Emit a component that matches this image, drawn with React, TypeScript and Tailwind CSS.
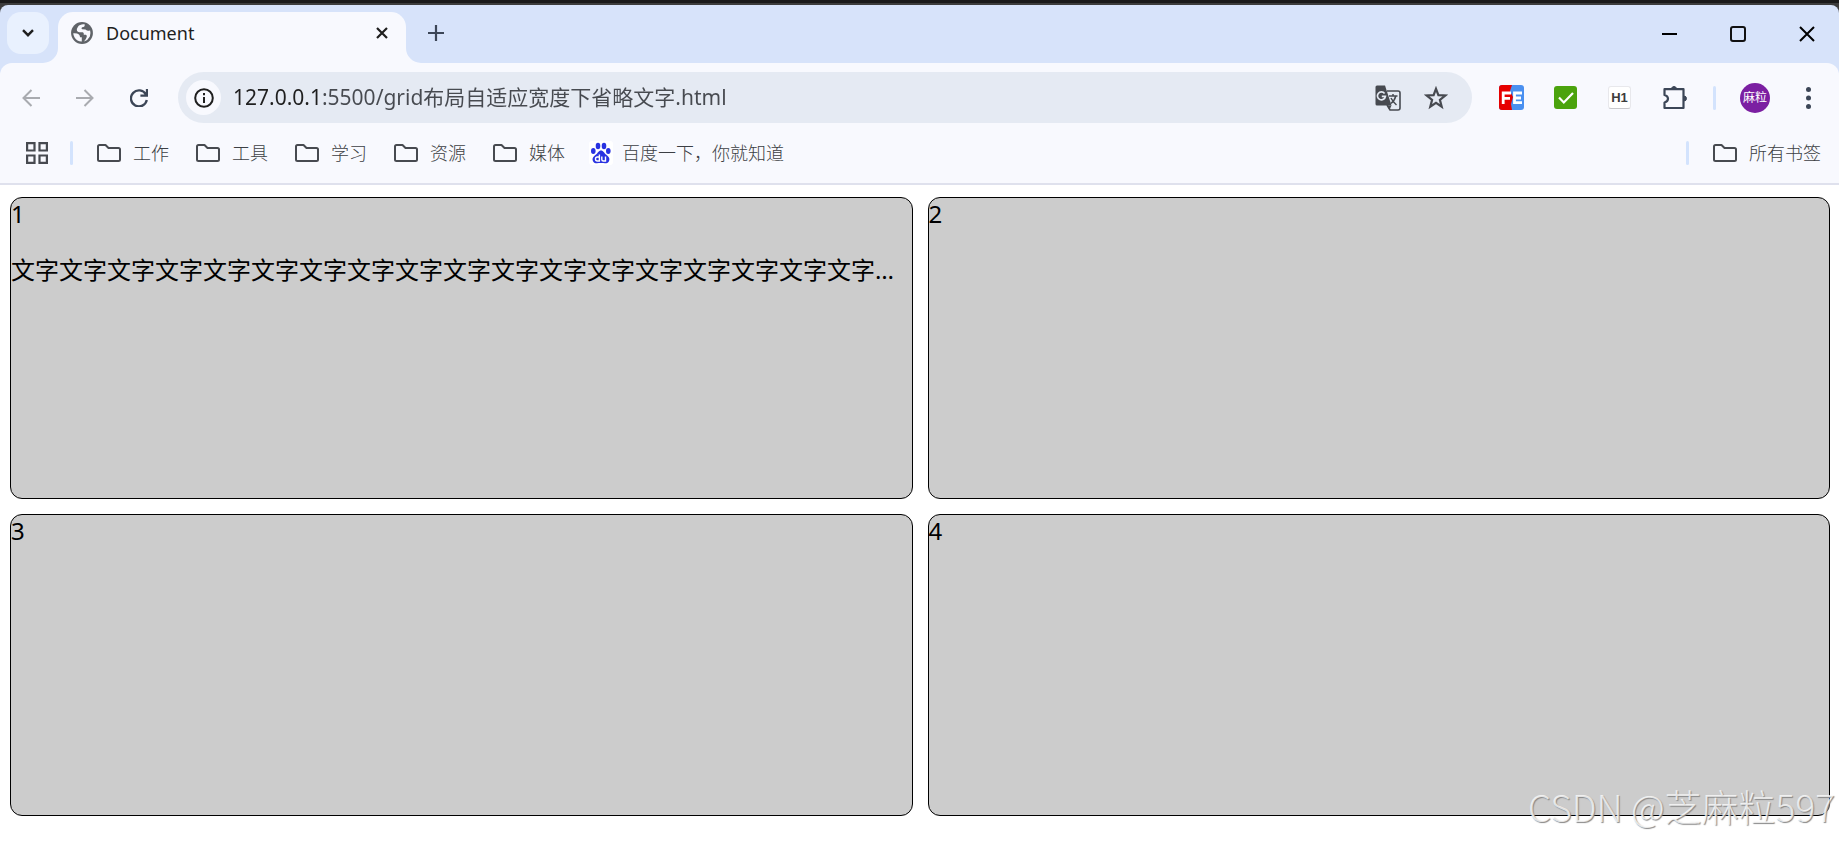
import React from 'react'

const bookmarks = ['工作', '工具', '学习', '资源', '媒体']

const text = '文字'.repeat(19)

const cards = [
  { title: '1', content: text },
  { title: '2', content: '' },
  { title: '3', content: '' },
  { title: '4', content: '' },
]

const FolderIcon = () => (
  <svg className="w-6 h-[18px]" viewBox="0 0 24 18" fill="none" stroke="#474a50" strokeWidth="2" strokeLinejoin="round">
    <path d="M2.5 1H8.5L11.5 4H21.5Q23 4 23 5.5V15.5Q23 17 21.5 17H2.5Q1 17 1 15.5V2.5Q1 1 2.5 1Z" />
  </svg>
)

const Divider = () => <span className="w-[3px] h-6 rounded-full bg-[#d3e3fd] shrink-0" />

const TabStrip = () => (
  <div className="h-[58px] flex items-end bg-[#d7e3fa] rounded-t-lg">
    <button aria-label="搜索标签页" className="ml-[7px] mb-[9px] w-[42px] h-[42px] rounded-[14px] bg-[#e9f1fe] flex items-center justify-center -mr-[6px]">
      <svg className="w-3 h-2" viewBox="0 0 12 8" fill="none" stroke="#1f1f1f" strokeWidth="2.4">
        <path d="M1 1.2L6 6.2L11 1.2" />
      </svg>
    </button>
    <svg className="w-[15px] h-[15px] shrink-0" viewBox="0 0 15 15" fill="#f8f9fe">
      <path d="M15 0V15H0A15 15 0 0 0 15 0Z" />
    </svg>
    <div className="w-[348px] h-[51px] rounded-t-[15px] bg-[#f8f9fe] flex items-center px-3 pb-[9px]">
      <svg className="w-6 h-6" viewBox="1 1 22 22">
        <circle cx="12" cy="12" r="10" fill="#5f6368" />
        <path
          d="M14.6 4.2C12 3.7 9.6 4.6 8.3 6.2Q6.8 8.2 7.4 9.9Q8 11.3 9.8 11.2H12.6Q13.6 11.3 13.6 12.5V13.7H15.6Q16.6 14 16.4 15.4Q16 17.3 13.8 19.7Q17.6 18.6 19.2 15.2Q20.3 12.4 19.4 9.4Q18.6 10 17.4 9.9Q15.9 9.8 15.2 8.8L12.2 8.6Q11.4 8.3 11.6 7.4Q11.8 6.7 13.4 6.6Q14.6 6.3 14.6 4.2ZM4 12.2Q7.8 12 9.2 13.4Q10.2 14.4 10.2 15.8H11.8V19.9Q7.5 20 5.2 16.2Q4 14.3 4 12.2Z"
          fill="#f8f9fe"
        />
      </svg>
      <span className="ml-3 flex-1 text-[18px] leading-6 text-[#1f1f1f]">Document</span>
      <button aria-label="关闭标签页" className="mr-1.5">
        <svg className="w-3 h-3" viewBox="0 0 12 12" stroke="#1f1f1f" strokeWidth="2.2">
          <path d="M1 1L11 11M11 1L1 11" />
        </svg>
      </button>
    </div>
    <svg className="w-[15px] h-[15px] shrink-0" viewBox="0 0 15 15" fill="#f8f9fe">
      <path d="M0 0V15H15A15 15 0 0 1 0 0Z" />
    </svg>
    <button aria-label="新标签页" className="ml-[7px] mb-[22px]">
      <svg className="w-4 h-4" viewBox="0 0 16 16" stroke="#3c4657" strokeWidth="2.2">
        <path d="M8 0V16M0 8H16" />
      </svg>
    </button>
    <div className="ml-auto mr-6 mb-[21px] flex items-center gap-[53px]">
      <button aria-label="最小化">
        <svg className="w-4 h-4" viewBox="0 0 16 16" stroke="#000" strokeWidth="2">
          <path d="M1 8H16" />
        </svg>
      </button>
      <button aria-label="最大化">
        <svg className="w-4 h-4" viewBox="0 0 16 16" fill="none" stroke="#111" strokeWidth="2">
          <rect x="1" y="1" width="14" height="14" rx="2" />
        </svg>
      </button>
      <button aria-label="关闭">
        <svg className="w-4 h-4" viewBox="0 0 16 16" stroke="#000" strokeWidth="2">
          <path d="M1 1L15 15M15 1L1 15" />
        </svg>
      </button>
    </div>
  </div>
)

const Toolbar = () => (
  <div className="flex items-center pl-[22px] pr-7 pt-[9px]">
    <button aria-label="后退">
      <svg className="w-[18px] h-[18px]" viewBox="0 0 18 18" fill="none" stroke="#a9abb0" strokeWidth="2">
        <path d="M18 9H1.5M9.5 1L1.5 9L9.5 17" />
      </svg>
    </button>
    <button aria-label="前进" className="ml-9">
      <svg className="w-[18px] h-[18px]" viewBox="0 0 18 18" fill="none" stroke="#a9abb0" strokeWidth="2">
        <path d="M0 9H16.5M8.5 1L16.5 9L8.5 17" />
      </svg>
    </button>
    <button aria-label="重新加载" className="ml-9">
      <svg className="w-[18px] h-[18px]" viewBox="0 0 18 18" fill="none" stroke="#3c4657" strokeWidth="2.3">
        <path d="M15.9 5.4A8 8 0 1 0 16.8 11M17 0V6.6H10.4" />
      </svg>
    </button>
    <div className="ml-[30px] flex-1 h-[51px] rounded-full bg-[#e5eaf3] flex items-center pl-2 pr-6">
      <button aria-label="查看网站信息" className="w-[35px] h-[35px] rounded-full bg-[#f8f9fe] flex items-center justify-center">
        <svg className="w-5 h-5" viewBox="0 0 20 20" fill="none" stroke="#1f1f1f" strokeWidth="2">
          <circle cx="10" cy="10" r="8.8" />
          <path d="M10 9V15M10 5V7.2" />
        </svg>
      </button>
      <input
        aria-label="地址"
        defaultValue="127.0.0.1:5500/grid布局自适应宽度下省略文字.html"
        className="ml-3 pb-0.5 flex-1 min-w-0 text-[21px] leading-8 outline-none text-transparent bg-clip-text bg-[linear-gradient(to_right,#1f1f1f_88px,#474a50_88px)]"
      />
      <button aria-label="翻译此页">
        <svg className="w-[26px] h-[26px]" viewBox="0 0 26 26" fill="none">
          <path d="M12 6H23Q25 6 25 8V23Q25 25 23 25H15L12 20" stroke="#474a50" strokeWidth="1.6" />
          <path d="M2 .5H10L16.5 20.5H2Q.5 20.5 .5 19V2Q.5 .5 2 .5Z" fill="#474a50" />
          <path d="M12.5 20.5H16.5L14.5 25Z" fill="#474a50" />
          <path d="M9.6 8.4A4 4 0 1 0 10.4 11.4H6.8" stroke="#e5eaf3" strokeWidth="1.7" />
          <path d="M14 11H22.5M18 9V11M20.8 11Q19.5 16 15.8 18.5M16 13Q18 17 21.5 20" stroke="#474a50" strokeWidth="1.5" />
        </svg>
      </button>
      <button aria-label="添加书签" className="ml-[23px]">
        <svg className="w-6 h-6" viewBox="0 0 24 24" fill="none" stroke="#474a50" strokeWidth="2.2">
          <path d="M12 2.8L14.4 9.1L21.2 9.5L15.9 13.8L17.7 20.6L12 16.8L6.3 20.6L8.1 13.8L2.8 9.5L9.6 9.1Z" />
        </svg>
      </button>
    </div>
    <button aria-label="FE" className="ml-[27px]">
      <svg className="w-[25px] h-[25px]" viewBox="0 0 25 25">
        <rect width="25" height="25" rx="3" fill="#4a90f0" />
        <path d="M3 0H13L11 6L14 12L12 19L13 25H3Q0 25 0 22V3Q0 0 3 0Z" fill="#e60000" />
        <path d="M4.2 19V8H12M4.2 13.4H11M23 8H15.5V17.6H23M15.5 13H22" fill="none" stroke="#fff" strokeWidth="2.8" />
      </svg>
    </button>
    <button aria-label="扩展" className="ml-[30px] w-[23px] h-[23px] rounded-[3px] bg-[#4ba30d] flex items-center justify-center">
      <svg className="w-4 h-3" viewBox="0 0 16 12" fill="none" stroke="#fff" strokeWidth="2.2">
        <path d="M1 5.5L5.8 10.4L15 1" />
      </svg>
    </button>
    <button aria-label="标题" className="ml-[31px] w-[23px] h-[23px] rounded-[3px] bg-white border border-[#e8e8ec] border-b-[#c8c8cc] flex items-center justify-center text-[13px] leading-4 font-bold text-[#3c3c3c] font-['Liberation_Sans',sans-serif]">
      H1
    </button>
    <button aria-label="扩展程序" className="ml-8">
      <svg className="w-[25px] h-[25px]" viewBox="0 0 25 25" fill="none" stroke="#3c4657" strokeWidth="2.2" strokeLinejoin="round">
        <path d="M2 4.2H20.5V23H1.5V17.5Q5 16.5 5 13.8Q5 11 1.5 10V4.2Z" />
        <path d="M8.5 3.4A2.6 2.6 0 0 1 13.500 3.400ZM21.600 11A2.600 2.600 0 0 1 21.600 16Z" fill="#3c4657" strokeWidth="1" />
      </svg>
    </button>
    <div className="ml-[25px] flex items-center">
      <Divider />
    </div>
    <button aria-label="个人资料" className="ml-6 w-[30px] h-[30px] rounded-full bg-[#7b1fa2] text-white text-[12px] leading-4 whitespace-nowrap">
      麻粒
    </button>
    <button aria-label="菜单" className="ml-9">
      <svg className="w-[5px] h-[22px]" viewBox="0 0 5 22" fill="#3c4657">
        <circle cx="2.5" cy="2.5" r="2.5" />
        <circle cx="2.5" cy="11" r="2.5" />
        <circle cx="2.5" cy="19.5" r="2.5" />
      </svg>
    </button>
  </div>
)

const Bookmarks = () => (
  <div className="h-[62px] flex items-center pl-[26px] pr-[18px] text-[18px] leading-6 font-light text-[#3c3f44] border-b-2 border-[#dfe1ed]">
    <button aria-label="应用">
      <svg className="w-[22px] h-[22px]" viewBox="0 0 22 22" fill="none" stroke="#474a50" strokeWidth="2.2">
        <path d="M1.1 1.1H8.5V8.5H1.1ZM13.5 1.1H20.9V8.5H13.5ZM1.1 13.5H8.5V20.9H1.1ZM13.5 13.5H20.9V20.9H13.5Z" />
      </svg>
    </button>
    <div className="ml-[22px] mr-6 flex">
      <Divider />
    </div>
    <div className="flex items-center gap-[27px]">
      {bookmarks.map((item) => (
        <button key={item} className="flex items-center gap-3">
          <FolderIcon />
          {item}
        </button>
      ))}
    </div>
    <a href="#" className="ml-6 flex items-center gap-[9px]">
      <svg className="w-6 h-6" viewBox="0 0 24 24" fill="#2932e1">
        <rect width="24" height="24" rx="3" fill="#fff" />
        <ellipse cx="9" cy="5" rx="2.3" ry="3.2" />
        <ellipse cx="15" cy="5" rx="2.3" ry="3.2" />
        <ellipse cx="4.3" cy="10" rx="2.3" ry="3" />
        <ellipse cx="19.3" cy="10" rx="2.3" ry="3" />
        <path d="M12 9.5C14.5 9.5 15 12 17 13.6C19.5 15.6 21.3 17.5 20 20.2C18.5 23.2 15 22 12 22S5.5 23.2 4 20.2C2.7 17.5 4.5 15.6 7 13.6C9 12 9.5 9.5 12 9.5Z" />
        <path d="M10.4 13.5V20H8.2Q6.5 20 6.5 18T8.2 16H10.4M12.8 15.5V18.5Q12.8 20 14.3 20H16.5V15.5" fill="none" stroke="#fff" strokeWidth="1.4" />
      </svg>
      百度一下，你就知道
    </a>
    <div className="ml-auto flex items-center">
      <Divider />
      <button className="ml-6 flex items-center gap-3">
        <FolderIcon />
        所有书签
      </button>
    </div>
  </div>
)

export default function App() {
  return (
    <div className="min-h-screen bg-white font-['Noto_Sans','Noto_Sans_CJK_SC',sans-serif]">
      <header className="bg-[#1a1a1a] pt-[3px]">
        <div className="bg-[#3c3c3c] pt-0.5">
          <TabStrip />
        </div>
        <div className="bg-[#d7e3fa]">
          <div className="bg-[#f8f9fe] rounded-t-xl">
            <Toolbar />
            <Bookmarks />
          </div>
        </div>
      </header>
      <main className="relative pl-2.5 pr-[9px] pt-3 pb-[26px]">
        <div className="grid grid-cols-2 gap-[15px]">
          {cards.map((item) => (
            <section key={item.title} className="h-[302px] min-w-0 rounded-[12px] border border-black bg-[#ccc] text-[24px] leading-8 text-black">
              <div>{item.title}</div>
              {item.content && <p className="mt-6 truncate">{item.content}</p>}
            </section>
          ))}
        </div>
        <div className="absolute right-1 bottom-3 text-[37px] leading-[48px] font-light text-white/75 [text-shadow:1px_1px_1px_#888] font-['Noto_Sans_CJK_SC',sans-serif]">
          CSDN @芝麻粒597
        </div>
      </main>
    </div>
  )
}
